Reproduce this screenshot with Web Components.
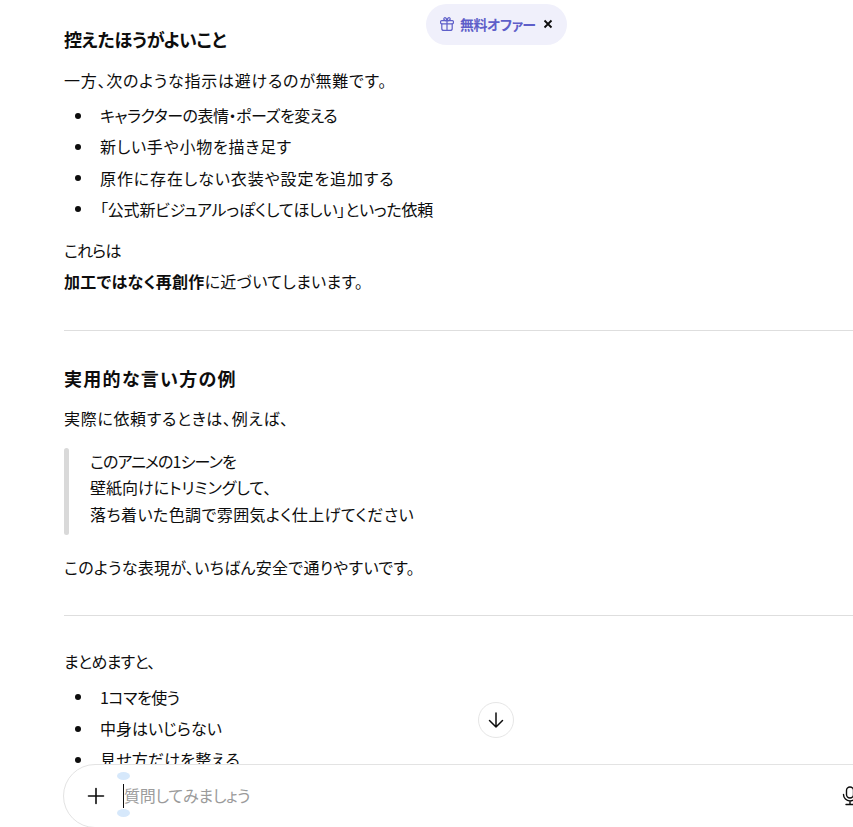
<!doctype html>
<html lang="ja">
<head>
<meta charset="utf-8">
<title>chat</title>
<style>
  html, body { margin: 0; height: 827px; overflow: hidden; background: #fff; }
  body {
    font-family: "Noto Sans CJK JP", "Noto Sans", sans-serif;
    font-size: 16px;
    color: #0d0d0d;
    font-feature-settings: "palt";
  }
</style>
</head>
<body>
<chat-page>
  <answer-heading style="letter-spacing:-.3px">控えたほうがよいこと</answer-heading>
  <answer-para style="letter-spacing:.76px">一方、次のような指示は避けるのが無難です。</answer-para>
  <answer-list style="margin-bottom:10px">
    <answer-item style="letter-spacing:-.47px">キャラクターの表情・ポーズを変える</answer-item>
    <answer-item style="letter-spacing:.75px">新しい手や小物を描き足す</answer-item>
    <answer-item style="letter-spacing:.89px">原作に存在しない衣装や設定を追加する</answer-item>
    <answer-item style="letter-spacing:-.2px">「公式新ビジュアルっぽくしてほしい」といった依頼</answer-item>
  </answer-list>
  <answer-para><span style="letter-spacing:-.75px">これらは</span><br><span style="letter-spacing:.3px"><b>加工ではなく再創作</b>に近づいてしまいます。</span></answer-para>
  <answer-rule style="margin-top:33px"></answer-rule>
  <answer-heading style="letter-spacing:1.3px;margin:33px 0 11px">実用的な言い方の例</answer-heading>
  <answer-para style="letter-spacing:.67px">実際に依頼するときは、例えば、</answer-para>
  <answer-quote><span style="letter-spacing:-.9px">このアニメの1シーンを</span><br>壁紙向けにトリミングして、<br><span style="letter-spacing:.43px">落ち着いた色調で雰囲気よく仕上げてください</span></answer-quote>
  <answer-para style="letter-spacing:.3px">このような表現が、いちばん安全で通りやすいです。</answer-para>
  <answer-rule style="margin-top:31px"></answer-rule>
  <answer-para style="letter-spacing:-.7px;margin-bottom:5px">まとめますと、</answer-para>
  <answer-list>
    <answer-item style="letter-spacing:-.5px">1コマを使う</answer-item>
    <answer-item>中身はいじらない</answer-item>
    <answer-item style="letter-spacing:.2px">見せ方だけを整える</answer-item>
  </answer-list>
</chat-page>
<script>
  function define(name, css, html) {
    customElements.define(
      name,
      class extends HTMLElement {
        constructor() {
          super();
          this.attachShadow({ mode: "open" }).innerHTML = `<style>${css}</style>${html}`;
        }
      }
    );
  }

  define("answer-heading", `
    :host { display: block; font-size: 18px; font-weight: 700; line-height: 28px; margin: 8px 0 12px; }
  `, `<slot></slot>`);

  define("answer-para", `
    :host { display: block; line-height: 31.2px; margin-bottom: 4px; }
    ::slotted(b) { font-weight: 700; }
  `, `<slot></slot>`);

  define("answer-list", `
    :host { display: block; margin-bottom: 11px; }
  `, `<slot></slot>`);

  define("answer-item", `
    :host { display: flex; line-height: 31.2px; }
    i { flex: none; width: 36px; display: flex; align-items: center; padding-left: 11px; box-sizing: border-box; }
    i::before { content: ""; width: 6px; height: 6px; border-radius: 50%; background: #0d0d0d; }
  `, `<i></i><span><slot></slot></span>`);

  define("answer-rule", `
    :host { display: block; height: 1px; background: #dedede; margin: 32px -40px 30px 0; }
  `, ``);

  define("answer-quote", `
    :host { display: block; position: relative; padding: 0 0 8px 26px; line-height: 26.6px; margin: 13px 0 17px; }
    :host::before { content: ""; position: absolute; left: 0; top: 0; bottom: 0; width: 5px; border-radius: 3px; background: #d9d9d9; }
  `, `<div><slot></slot></div>`);

  define("offer-badge", `
    :host { position: absolute; top: 4px; left: 426px; height: 41px; box-sizing: border-box; padding: 0 14px 2px 13px; display: flex; align-items: center; gap: 5px; border-radius: 21px; background: #f0f0fb; color: #5e5fc9; font-size: 14px; font-weight: 700; line-height: 20px; white-space: nowrap; }
    svg { width: 16px; height: 16px; flex: none; }
    span { letter-spacing: -.5px; }
    .close { margin-left: 2px; width: 10px; height: 10px; color: #0d0d0d; }
  `, `
    <svg viewBox="0 0 16 16" fill="none" stroke="currentColor" stroke-width="1.2" stroke-linecap="round" stroke-linejoin="round">
      <rect x="1.6" y="4.6" width="12.8" height="3.2" rx="1"/>
      <path d="M2.8 7.8v4.6a2 2 0 0 0 2 2h6.4a2 2 0 0 0 2-2V7.8M8 4.6v9.8M8 4.6C6.6 4.6 4.8 4.2 4.8 2.9 4.8 1.8 6 1.4 6.8 2 7.6 2.6 8 4.6 8 4.6zM8 4.6c1.4 0 3.2-.4 3.2-1.7 0-1.1-1.2-1.5-2-.9C8.4 2.6 8 4.6 8 4.6z"/>
    </svg>
    <span>無料オファー</span>
    <svg class="close" viewBox="0 0 10 10" fill="none" stroke="currentColor" stroke-width="1.8"><path d="M1.5 1.5l7 7M8.5 1.5l-7 7"/></svg>
  `);

  define("scroll-down", `
    :host { position: absolute; left: 478px; top: 702px; width: 36px; height: 36px; box-sizing: border-box; border: 1px solid #e6e6e6; border-radius: 50%; background: #fff; display: flex; align-items: center; justify-content: center; }
    svg { width: 20px; height: 20px; }
  `, `
    <svg viewBox="0 0 20 20" fill="none" stroke="#0d0d0d" stroke-width="1.5" stroke-linecap="round" stroke-linejoin="round"><path d="M10 3v14M3.500 10.500L10 17l6.500-6.500"/></svg>
  `);

  define("chat-composer", `
    :host { position: absolute; left: 63px; top: 764px; width: 840px; height: 64px; box-sizing: border-box; border: 1px solid #e3e3e3; border-radius: 32px; background: #fff; display: flex; align-items: center; padding-left: 23px; font-size: 16px; color: #9b9b9b; }
    .plus { width: 18px; height: 18px; flex: none; }
    .field { position: relative; margin-left: 18px; display: flex; align-items: center; height: 24px; border-left: 1px solid #0d0d0d; line-height: 22px; padding-bottom: 2px; box-sizing: border-box; letter-spacing: -.2px; }
    .drop { position: absolute; left: -7px; width: 13px; height: 8px; border-radius: 50%; background: #d6e8fb; }
    .drop.up { top: -12px; }
    .drop.down { bottom: -9px; }
    .mic { position: absolute; left: 778px; top: 21px; width: 16px; height: 20px; }
  `, `
    <svg class="plus" viewBox="0 0 18 18" fill="none" stroke="#0d0d0d" stroke-width="1.6" stroke-linecap="round"><path d="M9 1.500v15M1.500 9h15"/></svg>
    <div class="field"><i class="drop up"></i><span>質問してみましょう</span><i class="drop down"></i></div>
    <svg class="mic" viewBox="0 0 16 20" fill="none" stroke="#0d0d0d" stroke-width="1.4" stroke-linecap="round"><rect x="4.500" y="1" width="7" height="11" rx="3.500"/><path d="M1.500 8.500a6.500 6.500 0 0 0 13 0M8 15v3.500M4 18.500h8"/></svg>
  `);

  define("chat-page", `
    :host { display: block; position: relative; width: 853px; height: 827px; overflow: hidden; }
    .scroll { padding: 17px 0 0 64px; }
  `, `
    <div class="scroll"><slot></slot></div>
    <offer-badge></offer-badge>
    <scroll-down></scroll-down>
    <chat-composer></chat-composer>
  `);
</script>
</body>
</html>
